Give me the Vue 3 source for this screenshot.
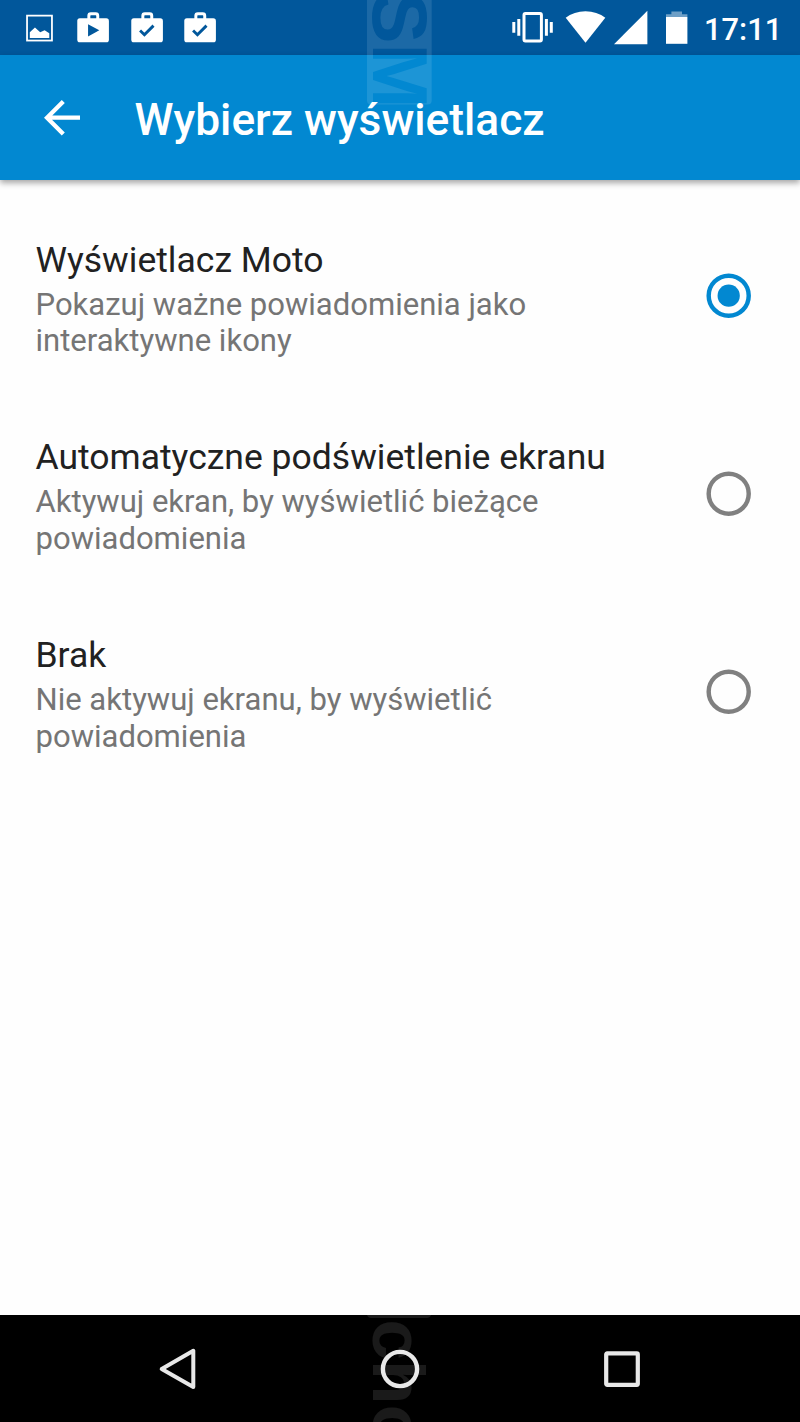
<script setup>
import { ref } from 'vue'

const selected = ref(0)
const options = [
  { title: 'Wyświetlacz Moto', lines: ['Pokazuj ważne powiadomienia jako', 'interaktywne ikony'] },
  { title: 'Automatyczne podświetlenie ekranu', lines: ['Aktywuj ekran, by wyświetlić bieżące', 'powiadomienia'] },
  { title: 'Brak', lines: ['Nie aktywuj ekranu, by wyświetlić', 'powiadomienia'] },
]
const bags = ['play', 'check', 'check']
</script>

<template>
  <div class="screen">
    <header class="status">
      <div class="notifications">
        <svg class="note" viewBox="13 0 54 55">
          <rect x="27.2" y="15.5" width="25.2" height="25.2" fill="none" stroke="#fff" stroke-width="1.8" />
          <path d="M30 38V32.3L35.2 27.6 40.5 32.2 45 30.2 49.7 33.2V38Z" fill="#fff" />
        </svg>
        <svg v-for="(kind, i) in bags" :key="i" class="note" viewBox="65.9 0 54 55">
          <path d="M89 19V15.6Q89 13.6 91 13.6H96Q98 13.6 98 15.6V19" fill="none" stroke="#fff" stroke-width="3" />
          <rect x="77.3" y="18.2" width="32" height="24.2" rx="2.6" fill="#fff" />
          <path v-if="kind === 'play'" d="M88.2 24.2V36.6L99.6 30.3Z" fill="#01579b" />
          <path v-else d="M86.2 30.6 90.6 34.8 99.8 25.6" fill="none" stroke="#01579b" stroke-width="2.9" />
        </svg>
      </div>
      <div class="system">
        <svg class="vibrate" viewBox="512 0 41 55">
          <rect x="524" y="13.5" width="17.4" height="27.5" rx="1.4" fill="none" stroke="#fff" stroke-width="3" />
          <path d="M513.8 22V32.7M518.8 19V35.8M546.4 19V35.8M551.3 22V32.7" stroke="#fff" stroke-width="3" />
        </svg>
        <svg class="wifi" viewBox="565 0 41 55">
          <path d="M585.5 42.8 565.7 17.8Q574 11.3 585.5 11.3T605.3 17.8Z" fill="#fff" />
        </svg>
        <svg class="signal" viewBox="614 0 34 55"><path d="M614 44.2H647.4V10.8Z" fill="#fff" /></svg>
        <svg class="battery" viewBox="665 0 23 55">
          <path d="M666 17V14.2H671.4V11.6H682V14.2H687.4V17Z" fill="#fff" fill-opacity=".43" />
          <path d="M666 17H687.4V43.8H666Z" fill="#fff" />
        </svg>
        <span class="clock">17:11</span>
      </div>
    </header>

    <div class="toolbar">
      <svg class="back" viewBox="44 99 38 38">
        <path d="M80 117.7H48M63.3 101.4 47 117.7 63.3 134" fill="none" stroke="#fff" stroke-width="4.3" />
      </svg>
      <h1>Wybierz wyświetlacz</h1>
    </div>

    <main class="options">
      <div v-for="(option, i) in options" :key="option.title" class="option" @click="selected = i">
        <div class="copy">
          <h2>{{ option.title }}</h2>
          <p v-for="line in option.lines" :key="line">{{ line }}</p>
        </div>
        <svg class="radio" :class="{ active: selected === i }" viewBox="0 0 24 24">
          <circle cx="12" cy="12" r="9" fill="none" stroke="currentColor" stroke-width="2" />
          <circle v-if="selected === i" cx="12" cy="12" r="5" fill="currentColor" />
        </svg>
      </div>
    </main>

    <nav class="navbar">
      <svg class="key" viewBox="0 0 48 48">
        <path d="M7.7 24 39.3 5.8V42Z" fill="none" stroke="#e8e8e8" stroke-width="4" stroke-linejoin="round" />
      </svg>
      <svg class="key" viewBox="0 0 48 48">
        <circle cx="24" cy="24" r="17.1" fill="none" stroke="#e8e8e8" stroke-width="4.4" />
      </svg>
      <svg class="key" viewBox="0 0 48 48">
        <rect x="8.2" y="8.4" width="31.6" height="31.4" rx="1" fill="none" stroke="#e8e8e8" stroke-width="4.2" />
      </svg>
    </nav>

    <svg class="watermark top" viewBox="360 0 80 110">
      <defs>
        <mask id="cut">
          <rect x="360" y="-10" width="80" height="120" fill="#fff" />
          <text transform="translate(372.7 -8.5) rotate(90)" font-size="78">SM</text>
        </mask>
      </defs>
      <rect x="367" y="-10" width="64.7" height="114.5" rx="4" fill="#fff" fill-opacity=".11" mask="url(#cut)" />
    </svg>
    <svg class="watermark bottom" viewBox="360 1315 80 107">
      <g fill="#fff" fill-opacity=".1">
        <path d="M367 1315H431Q430 1318 427 1318H371Q368 1318 367 1315Z" />
        <text transform="translate(372.7 1319.5) rotate(90)" font-size="73">cho</text>
      </g>
    </svg>
  </div>
</template>

<style>
body {
  margin: 0;
  background: #fff;
}
</style>

<style scoped>
.screen {
  position: relative;
  display: flex;
  flex-direction: column;
  width: 800px;
  height: 1422px;
  overflow: hidden;
  background: #fefefe;
  font-family: Roboto, "Noto Sans", sans-serif;
}
svg {
  display: block;
  flex: none;
}
.status {
  display: flex;
  justify-content: space-between;
  height: 55px;
  background: #01579b;
}
.notifications {
  display: flex;
  padding-left: 13px;
}
.note {
  width: 53.4px;
  height: 55px;
}
.system {
  display: flex;
  padding-right: 20px;
}
.system svg {
  height: 55px;
}
.vibrate {
  width: 41px;
}
.wifi {
  width: 41px;
  margin-left: 12px;
}
.signal {
  width: 34px;
  margin-left: 8px;
}
.battery {
  width: 23px;
  margin-left: 17px;
}
.clock {
  width: 76px;
  margin-left: 16px;
  color: #fff;
  font-size: 30.8px;
  font-weight: 500;
  line-height: 59px;
  white-space: nowrap;
}
.toolbar {
  z-index: 1;
  display: flex;
  align-items: center;
  height: 125px;
  padding-left: 44px;
  background: #0288d1;
  box-shadow: 0 3px 6px rgba(0, 0, 0, .35);
}
.back {
  width: 38px;
  height: 38px;
}
h1 {
  margin: 5px 0 0 52.5px;
  color: #fff;
  font-size: 44.3px;
  font-weight: 500;
  line-height: 52px;
  white-space: nowrap;
}
.options {
  flex: 1;
  padding-top: 17px;
}
.option {
  display: flex;
  align-items: center;
  justify-content: space-between;
  height: 197.8px;
  padding: 0 44.5px 0 35.5px;
}
.copy {
  padding-top: 7.4px;
}
h2 {
  margin: 0 0 5.6px;
  color: #212121;
  font-size: 35.5px;
  font-weight: 400;
  line-height: 41.6px;
  white-space: nowrap;
}
p {
  margin: 0;
  color: #757575;
  font-size: 31.06px;
  line-height: 36.5px;
  white-space: nowrap;
}
.radio {
  width: 53.4px;
  height: 53.4px;
  color: #808080;
}
.radio.active {
  color: #0288d1;
}
.navbar {
  display: flex;
  align-items: center;
  justify-content: center;
  gap: 174px;
  height: 106.6px;
  background: #000;
}
.key {
  width: 48px;
  height: 48px;
}
.watermark {
  position: absolute;
  z-index: 2;
  left: 360px;
  width: 80px;
  pointer-events: none;
  font-family: "Liberation Sans", Arial, sans-serif;
  font-weight: 700;
}
.top {
  top: 0;
  height: 110px;
}
.bottom {
  bottom: 0;
  height: 107px;
}
</style>
